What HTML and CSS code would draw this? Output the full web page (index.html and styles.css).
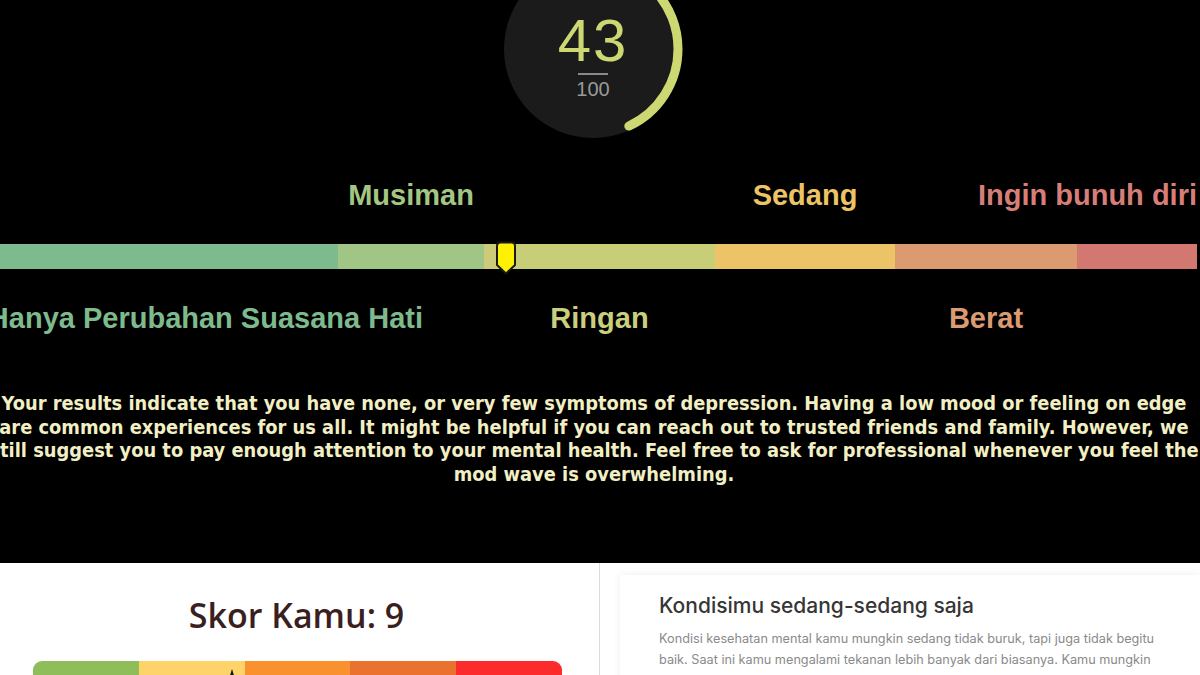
FILE: index.html
```html
<!DOCTYPE html>
<html lang="id">
<head>
<meta charset="utf-8">
<title>Hasil Tes</title>
<link rel="stylesheet" href="styles.css">
</head>
<body>
<section class="result">
  <div class="gauge">
    <svg width="180" height="180" viewBox="0 0 180 180">
      <circle cx="90" cy="90" r="89" fill="#1b1b1b"/>
      <circle cx="90" cy="90" r="85" fill="none" stroke="#cdd873" stroke-width="9" stroke-linecap="round" stroke-dasharray="229.6 534.1" transform="rotate(-90 90 90)"/>
      <text x="90" y="102" text-anchor="middle" class="g-num">43</text>
      <rect x="75" y="114" width="30" height="2" fill="#8a8a8a"/>
      <text x="90" y="137" text-anchor="middle" class="g-max">100</text>
    </svg>
  </div>

  <div class="labels labels-top">
    <span class="lab c2">Musiman</span>
    <span class="lab c4">Sedang</span>
    <span class="lab c6">Ingin bunuh diri</span>
  </div>

  <div class="bar">
    <span class="seg s1"></span>
    <span class="seg s2"></span>
    <span class="seg s3"></span>
    <span class="seg s4"></span>
    <span class="seg s5"></span>
    <span class="seg s6"></span>
    <svg class="marker" width="24" height="34" viewBox="0 0 24 34">
      <path d="M3 5 Q3 1.5 6.5 1.5 H17.5 Q21 1.5 21 5 V24 L12 32.5 L3 24 Z" fill="#fff200" stroke="#1a1a1a" stroke-width="2" stroke-linejoin="round"/>
    </svg>
  </div>

  <div class="labels labels-bottom">
    <span class="lab c1">Hanya Perubahan Suasana Hati</span>
    <span class="lab c3">Ringan</span>
    <span class="lab c5">Berat</span>
  </div>

  <div class="desc">
    <span class="line">Your results indicate that you have none, or very few symptoms of depression. Having a low mood or feeling on edge</span>
    <span class="line">are common experiences for us all. It might be helpful if you can reach out to trusted friends and family. However, we</span>
    <span class="line">still suggest you to pay enough attention to your mental health. Feel free to ask for professional whenever you feel the</span>
    <span class="line">mod wave is overwhelming.</span>
  </div>
</section>

<section class="bottom">
  <div class="score-panel">
    <h2 class="score-title">Skor Kamu: 9</h2>
    <div class="score-bar">
      <span class="sb b1"></span>
      <span class="sb b2"></span>
      <span class="sb b3"></span>
      <span class="sb b4"></span>
      <span class="sb b5"></span>
      <span class="pointer"></span>
    </div>
  </div>
  <div class="info-panel">
    <div class="card">
      <h3 class="card-title">Kondisimu sedang-sedang saja</h3>
      <p class="card-text">Kondisi kesehatan mental kamu mungkin sedang tidak buruk, tapi juga tidak begitu baik. Saat ini kamu mengalami tekanan lebih banyak dari biasanya. Kamu mungkin mulai merasa cemas, sedih, atau lelah lebih sering dari biasanya.</p>
    </div>
  </div>
</section>
</body>
</html>
```

FILE: styles.css
```css
* { box-sizing: border-box; }
html, body {
  margin: 0;
  padding: 0;
  width: 1200px;
  height: 675px;
  overflow: hidden;
  background: #000;
}
.result {
  height: 563px;
  background: #000;
  overflow: hidden;
}
.gauge {
  width: 180px;
  height: 180px;
  margin-left: 503px;
  margin-top: -41px;
}
.gauge svg { display: block; }
.g-num {
  font-family: "Liberation Sans", Arial, sans-serif;
  font-size: 60px;
  fill: #cdd873;
  letter-spacing: 2px;
}
.g-max {
  font-family: "Liberation Sans", Arial, sans-serif;
  font-size: 20px;
  fill: #9a9a9a;
}

.labels, .bar {
  display: grid;
  grid-template-columns: 338px 146px 231px 180px 182px 120px;
  width: 1197px;
}
.labels {
  height: 34px;
  font-family: "Liberation Sans", Arial, sans-serif;
  font-weight: bold;
  font-size: 29px;
  line-height: 34px;
}
.labels-top { margin-top: 39px; }
.labels-bottom { margin-top: 32px; }
.lab { white-space: nowrap; justify-self: center; }
.c1 { grid-column: 1; justify-self: end; margin-right: -85px; color: #7dba8e; }
.c2 { grid-column: 2; color: #a3c782; }
.c3 { grid-column: 3; color: #c9cf7a; }
.c4 { grid-column: 4; color: #ecc466; }
.c5 { grid-column: 5; color: #dc9a70; }
.c6 { grid-column: 6; justify-self: end; color: #d67e77; }

.bar {
  position: relative;
  height: 25px;
  margin-top: 32px;
}
.seg { display: block; height: 25px; }
.s1 { background: #7dba8e; }
.s2 { background: #a1c584; }
.s3 { background: linear-gradient(to right, #cccb7a 0, #cccb7a 11px, #c8cd78 11px); }
.s4 { background: #ecc467; }
.s5 { background: #dc9a70; }
.s6 { background: #d37870; }
.marker {
  position: absolute;
  left: 494px;
  top: -3px;
}

.desc {
  width: 1188px;
  margin-top: 57px;
  text-align: center;
  font-family: "DejaVu Sans Condensed", "DejaVu Sans", sans-serif;
  font-weight: bold;
  font-size: 19.85px;
  line-height: 23.7px;
  color: #f2efc4;
}
.line {
  display: block;
  white-space: nowrap;
  margin: 0 -60px;
}

.bottom {
  display: flex;
  height: 112px;
  background: #fff;
}
.score-panel {
  width: 600px;
  border-right: 1px solid #dcdcdc;
  padding-top: 32px;
  overflow: hidden;
}
.score-title {
  margin: 0;
  text-align: center;
  font-family: "Open Sans", Lato, sans-serif;
  font-weight: 600;
  font-size: 34px;
  line-height: 40px;
  color: #3b1f1f;
  padding-right: 6px;
}
.score-bar {
  position: relative;
  display: flex;
  width: 529px;
  height: 22px;
  margin: 26px 0 0 33px;
  border-radius: 9px;
  overflow: hidden;
}
.sb { flex: 1; }
.b1 { background: #8fbd59; }
.b2 { background: #fed46a; }
.b3 { background: #f8912e; }
.b4 { background: #eb722e; }
.b5 { background: #fc2b2c; }
.pointer {
  position: absolute;
  left: 196px;
  top: 8px;
  width: 0;
  height: 0;
  border-left: 3px solid transparent;
  border-right: 3px solid transparent;
  border-bottom: 10px solid #111;
}

.info-panel {
  flex: 1;
  padding: 12px 0 0 20px;
}
.card {
  height: 200px;
  padding: 17px 30px 0 39px;
  background: #fff;
  box-shadow: 0 0 8px rgba(0, 0, 0, 0.07);
}
.card-title {
  margin: 0;
  font-family: Inter, "Open Sans", sans-serif;
  font-weight: 500;
  font-size: 21px;
  line-height: 28px;
  color: #363636;
}
.card-text {
  margin: 8px 0 0;
  width: 510px;
  font-family: Inter, "Open Sans", sans-serif;
  font-weight: 400;
  font-size: 12.7px;
  line-height: 21px;
  color: #8a8a8a;
}
```
